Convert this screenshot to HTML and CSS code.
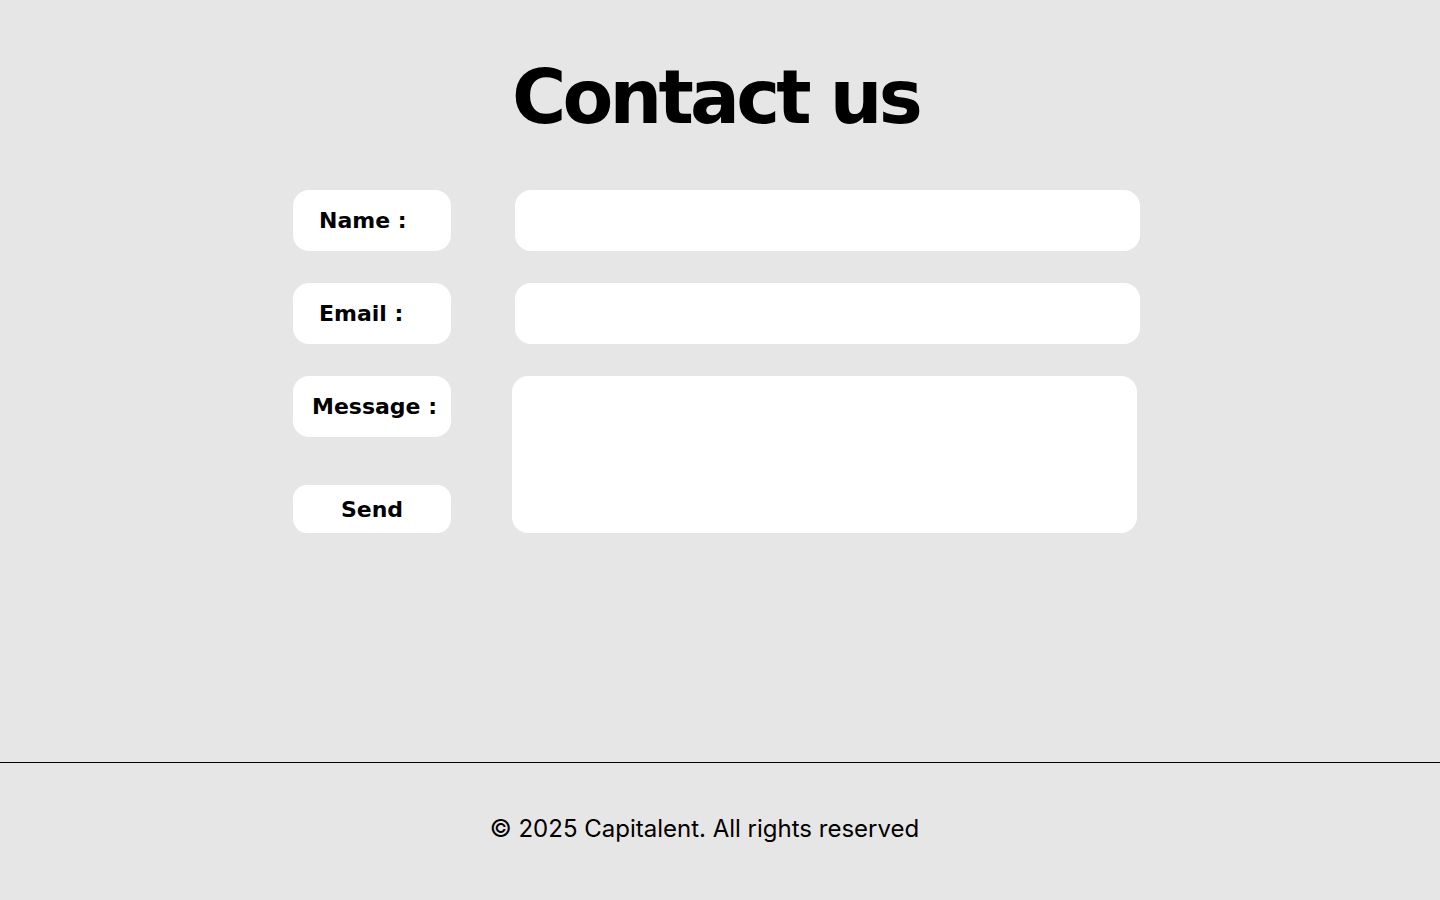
FILE: index.html
```html
<!DOCTYPE html>
<html lang="en">
<head>
<meta charset="utf-8">
<title>Contact us</title>
<link rel="stylesheet" href="styles.css">
</head>
<body>
<main class="page">
  <h1 class="title">Contact us</h1>
  <form class="contact-form">
    <div class="row">
      <label class="label-box label-box--pad" for="name">Name :</label>
      <input class="field" id="name" type="text">
    </div>
    <div class="row">
      <label class="label-box label-box--pad" for="email">Email :</label>
      <input class="field" id="email" type="email">
    </div>
    <div class="row row--message">
      <div class="side">
        <label class="label-box label-box--center" for="message">Message :</label>
        <button class="send" type="button">Send</button>
      </div>
      <textarea class="field field--area" id="message"></textarea>
    </div>
  </form>
</main>
<footer class="footer">
  <p class="copyright">© 2025 Capitalent. All rights reserved</p>
</footer>
</body>
</html>
```
FILE: styles.css
```css
* { box-sizing: border-box; }
html, body { margin: 0; padding: 0; }
body {
  background: #e6e6e6;
  color: #000;
  font-family: "DejaVu Sans", sans-serif;
  min-height: 900px;
}
.page {
  height: 762px;
  display: flex;
  flex-direction: column;
  align-items: center;
}
.title {
  margin: 0 0 0 -9px;
  padding-top: 60px;
  font-family: "DejaVu Sans", sans-serif;
  font-weight: 700;
  font-size: 74px;
  line-height: 74px;
  letter-spacing: -3.8px;
}
.contact-form {
  margin-top: 56px;
  display: flex;
  flex-direction: column;
  gap: 32px;
  margin-left: -7px;
}
.row {
  display: flex;
  gap: 64px;
  align-items: flex-start;
}
.label-box {
  width: 158px;
  height: 61px;
  background: #fff;
  border-radius: 16px;
  display: flex;
  align-items: center;
  font-weight: 700;
  font-size: 22px;
}
.label-box--pad { padding-left: 26px; }
.label-box--center { justify-content: center; padding-left: 5px; }
.field {
  width: 625px;
  height: 61px;
  background: #fff;
  border: none;
  border-radius: 16px;
  outline: none;
  font: inherit;
  padding: 0 16px;
}
.field--area {
  height: 157px;
  margin-left: -3px;
  resize: none;
}
.side {
  width: 158px;
  height: 157px;
  display: flex;
  flex-direction: column;
  justify-content: space-between;
}
.send {
  width: 158px;
  height: 48px;
  background: #fff;
  border: none;
  border-radius: 14px;
  font-family: "DejaVu Sans", sans-serif;
  font-weight: 700;
  font-size: 22px;
  color: #000;
  padding: 0;
}
.footer {
  border-top: 1px solid #000;
  padding-top: 50px;
  display: flex;
  justify-content: center;
}
.copyright {
  margin: 0;
  font-family: "Inter", sans-serif;
  font-size: 24px;
  line-height: 32px;
  padding-right: 31px;
}
```
